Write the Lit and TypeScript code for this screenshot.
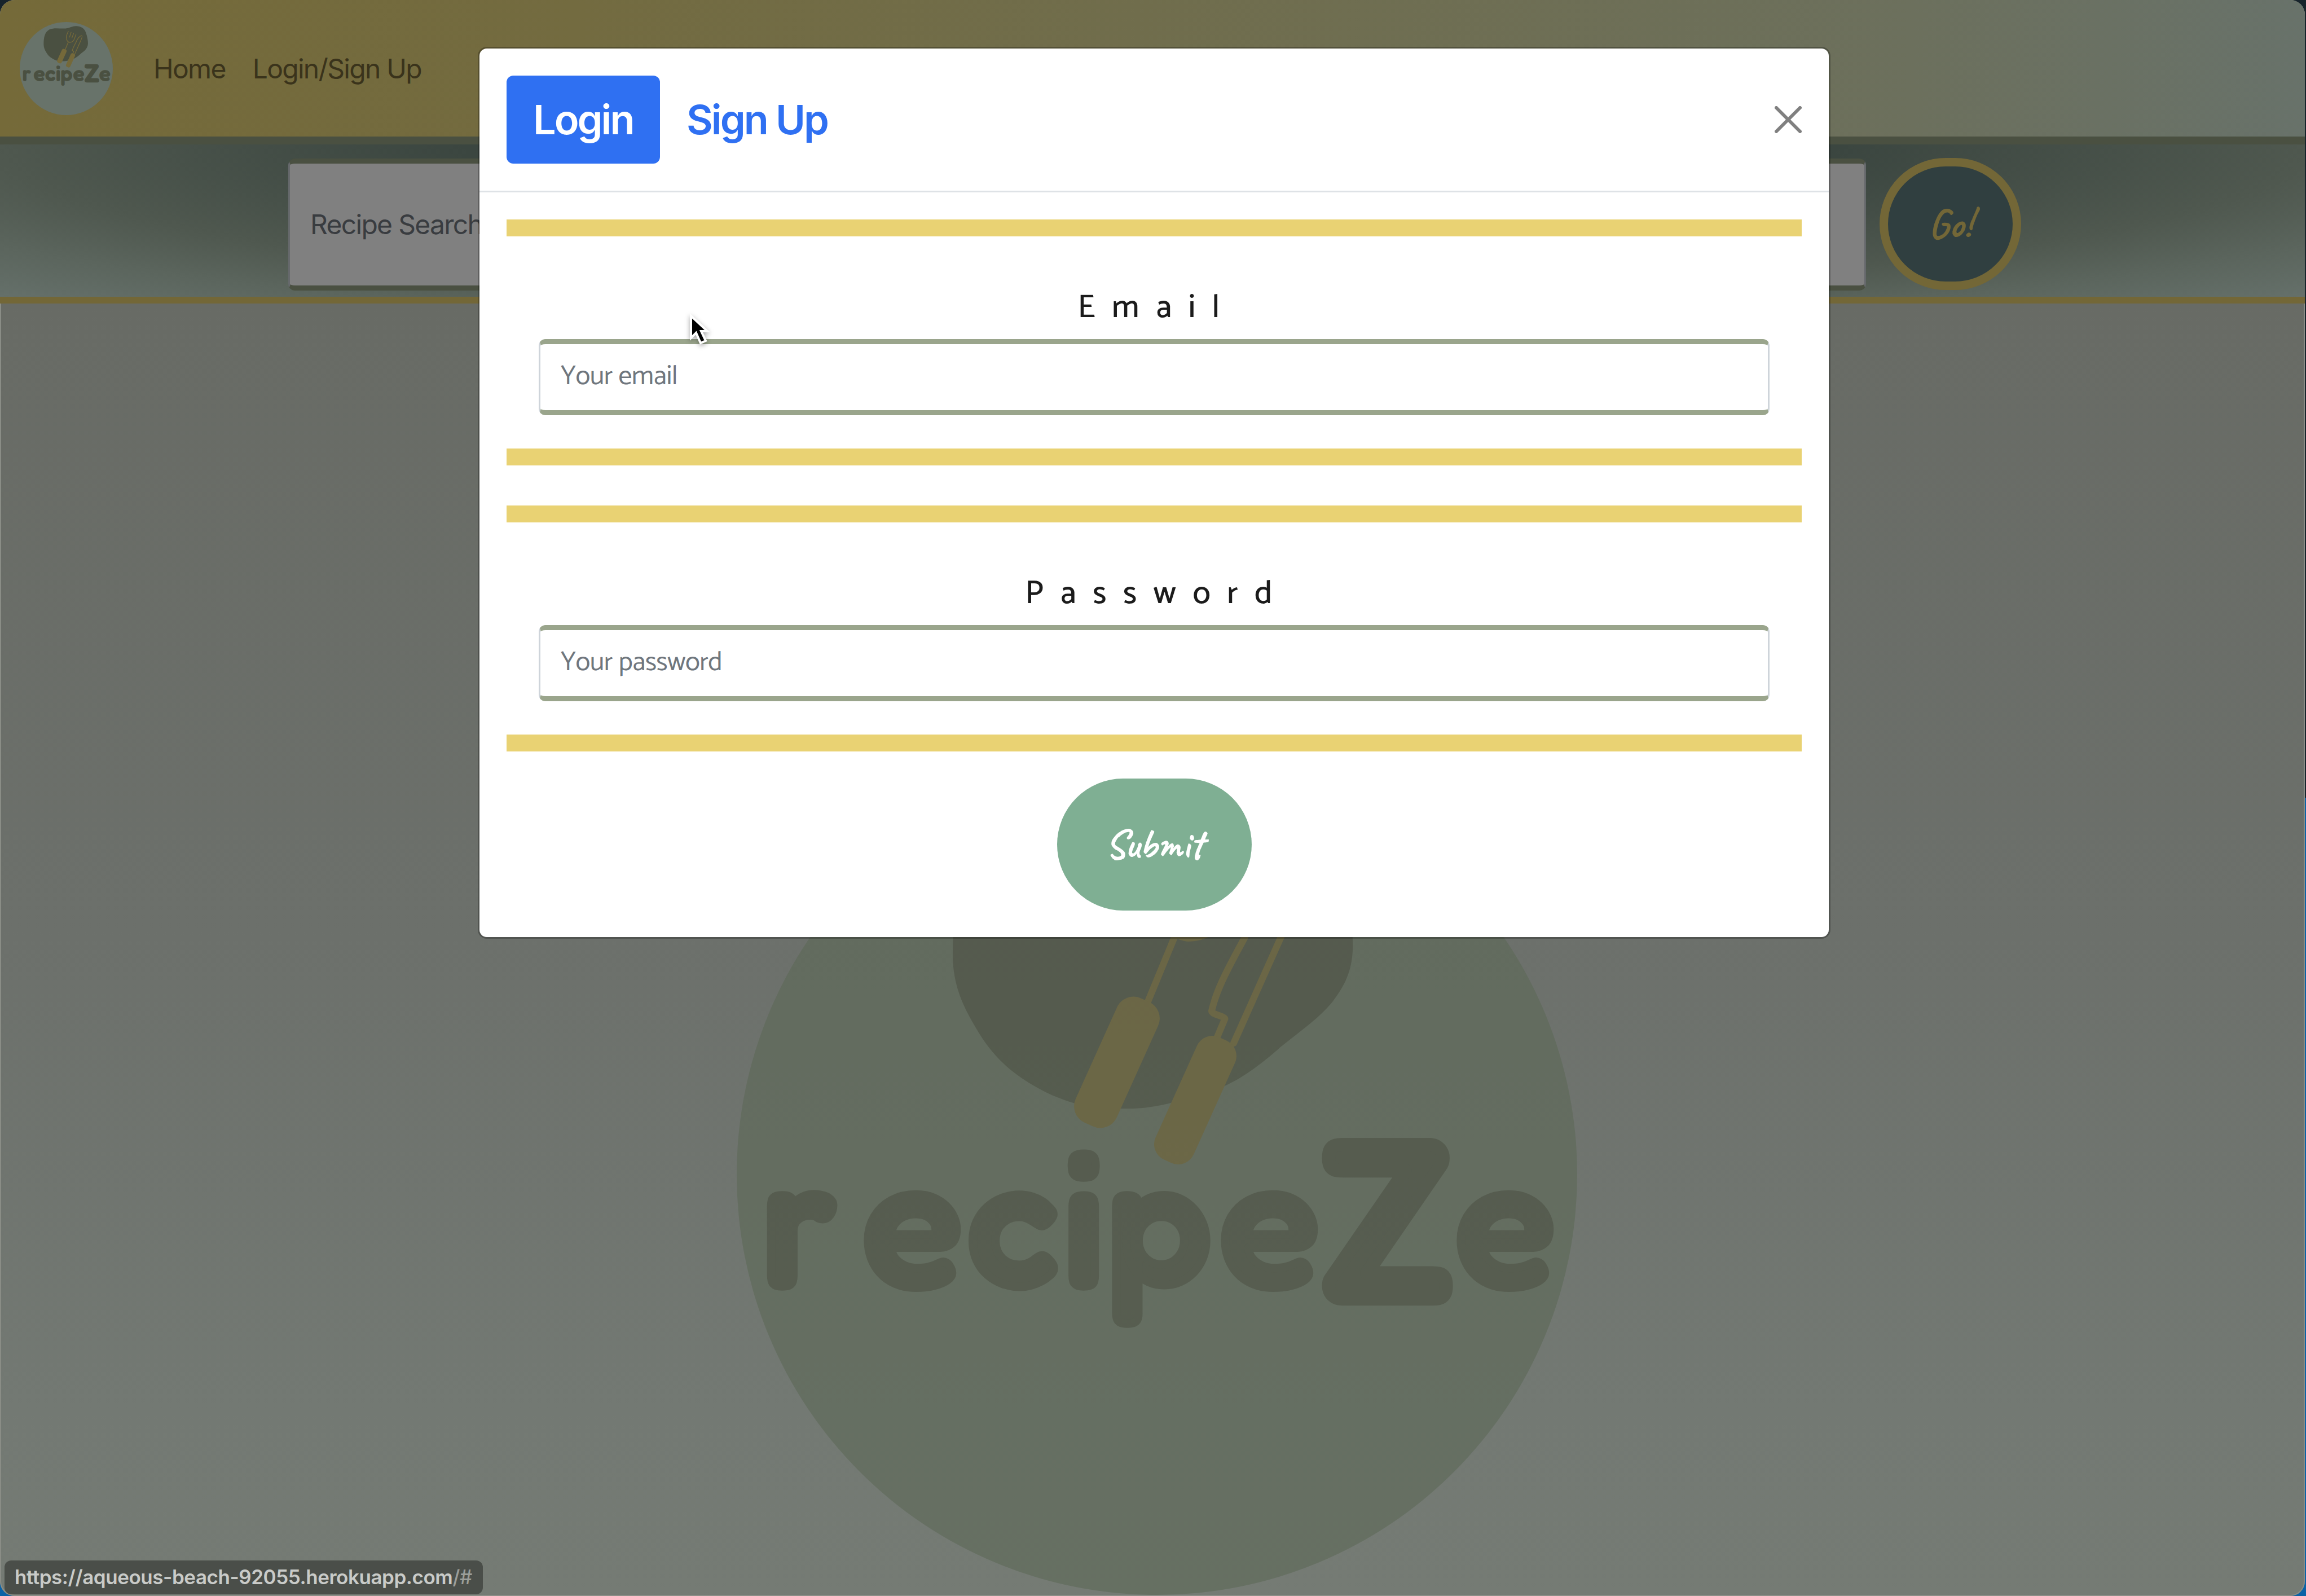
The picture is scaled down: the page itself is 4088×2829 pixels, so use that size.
import { LitElement, html, css, svg } from "lit";
import { customElement, property } from "lit/decorators.js";

@customElement("recipe-logo")
class RecipeLogo extends LitElement {
  static styles = css`
    :host {
      display: block;
    }
    .mark {
      display: block;
      width: 100%;
      height: 100%;
    }
    .disc {
      fill: var(--logo-disc);
    }
    .pan {
      fill: var(--logo-ink);
    }
    .line {
      fill: none;
      stroke: var(--logo-gold);
      stroke-width: 12;
      stroke-linecap: round;
      stroke-linejoin: round;
    }
    .handle {
      fill: var(--logo-gold);
    }
    .word {
      font-family: Fredoka, Itim, Inter, sans-serif;
      font-size: 328px;
      font-weight: 500;
      fill: var(--logo-ink);
      stroke: var(--logo-ink);
      stroke-width: 15;
      stroke-linejoin: round;
      stroke-linecap: round;
    }
    .big {
      font-size: 390px;
      stroke-width: 24;
    }
  `;

  render() {
    return html`<svg class="mark" viewBox="0 0 1490 1490" role="img">
      ${svg`
        <circle class="disc" cx="745" cy="745" r="745"></circle>
        <path class="pan" d="M383 363 C383 240 400 160 480 118 C560 85 650 112 737 103 C800 98 850 62 904 66 C980 68 1030 100 1055 160 C1080 230 1094 290 1092 348 C1090 385 1078 410 1056 439 C1030 470 1000 490 964 519 C935 545 900 572 867 587 C830 605 800 614 770 618 C740 625 720 628 694 628 C660 628 625 628 597 618 C570 610 548 600 526 587 C480 560 450 530 424 485 C400 445 385 410 383 363 Z"></path>
        <path class="line" d="M776 151 C765 185 746 205 746 240 C746 285 765 322 800 326 C845 326 868 292 878 262 L900 200"></path>
        <path class="line" d="M822 165 L798 242 M862 182 L835 255 M777 322 L725 448"></path>
        <path class="line" d="M849 508 L865 470 C868 464 842 462 842 455 C850 420 865 390 900 326 C920 270 960 215 995 220 C1010 228 985 280 964 326 L881 512"></path>
        <rect class="handle" x="-40" y="-121" width="80" height="242" rx="32" transform="translate(674 546) rotate(24.3)"></rect>
        <rect class="handle" x="-37" y="-119" width="74" height="238" rx="30" transform="translate(813 613) rotate(24.3)"></rect>
        <text class="word" y="940" x="44 223 407 577 658 856 1040 1274">recipe<tspan class="big" y="961">Z</tspan><tspan y="940">e</tspan></text>
      `}
    </svg>`;
  }
}

@customElement("form-group")
class FormGroup extends LitElement {
  @property() label = "";
  @property() hint = "";
  @property() kind = "text";

  static styles = css`
    :host {
      display: block;
    }
    .group {
      box-sizing: border-box;
      height: 436px;
      border-top: 30px solid #e9d273;
      border-bottom: 30px solid #e9d273;
      padding: 91px 57px 0;
      display: flex;
      flex-direction: column;
    }
    .label {
      font-family: Catamaran, Lato, "Open Sans", sans-serif;
      font-size: 57.6px;
      line-height: 72px;
      letter-spacing: 29.4px;
      font-weight: 500;
      color: #1b1b1b;
      text-align: center;
      margin-bottom: 19px;
      padding-left: 10px;
    }
    .field {
      box-sizing: border-box;
      width: 100%;
      height: 135px;
      border: 3px solid #ced4da;
      border-top: 9px solid #9aa58c;
      border-bottom: 9px solid #9aa58c;
      border-radius: 12px;
      padding: 0 36px 2px;
      background: #fff;
      font-family: Catamaran, Lato, "Open Sans", sans-serif;
      font-size: 48px;
      letter-spacing: -0.5px;
      color: #212529;
      outline: none;
    }
    .field::placeholder {
      color: #6f767d;
      opacity: 1;
    }
  `;

  render() {
    return html`<div class="group">
      <label class="label" for="field">${this.label}</label>
      <input class="field" id="field" type=${this.kind} placeholder=${this.hint} />
    </div>`;
  }
}

@customElement("app-root")
class AppRoot extends LitElement {
  static styles = css`
    :host {
      display: block;
      width: 4088px;
      height: 2829px;
      font-family: Inter, "Liberation Sans", sans-serif;
      font-size: 48px;
    }
    .desktop {
      width: 4088px;
      height: 2829px;
      background: linear-gradient(#17232b 50%, #0b62a6 50%);
    }
    .page {
      position: relative;
      box-sizing: border-box;
      width: 4086px;
      height: 2829px;
      overflow: hidden;
      border-radius: 26px;
      display: flex;
      flex-direction: column;
      background: linear-gradient(#686b65 538px, #6c706b 1650px, #737973 2500px, #757b74);
      box-shadow: inset 0 0 0 2px #8a8d86;
    }
    .nav {
      box-sizing: border-box;
      height: 256px;
      border-bottom: 14px solid #4a5041;
      background: linear-gradient(90deg, #756a39, #736b40 25%, #6c705d 83%, #68726a);
      display: flex;
      align-items: center;
      padding-left: 35px;
    }
    .brand {
      width: 165px;
      height: 165px;
      --logo-disc: #68736a;
      --logo-ink: #4a5041;
      --logo-gold: #75693a;
    }
    .links {
      display: flex;
      gap: 48px;
      margin-left: 72px;
      color: #3a331b;
    }
    .link {
      letter-spacing: -1.7px;
      font-weight: 430;
    }
    .search {
      box-sizing: border-box;
      height: 282px;
      border-bottom: 12px solid #736737;
      background: radial-gradient(ellipse farthest-corner at top, #37413a, #3b4640 42%, #4f584f 71%, #5b655d 85%, #65706a);
      display: flex;
      align-items: flex-start;
      padding: 24px 0 0 511px;
    }
    .query {
      box-sizing: border-box;
      width: 2797px;
      height: 234px;
      margin-top: 1px;
      border: 3px solid #66696c;
      border-top: 9px solid #4a5041;
      border-bottom: 9px solid #4a5041;
      border-radius: 12px;
      background: #808080;
      padding: 0 36px 2px;
      font-family: inherit;
      font-size: 48px;
      font-weight: 430;
      letter-spacing: -1.7px;
      outline: none;
    }
    .query::placeholder {
      color: #393c40;
      opacity: 1;
    }
    .go {
      box-sizing: border-box;
      width: 251px;
      height: 234px;
      margin-left: 24px;
      border: 15px solid #736737;
      border-radius: 117px;
      background: #303f40;
      color: #736737;
      display: flex;
      align-items: center;
      justify-content: center;
      padding: 0;
    }
    .script {
      font-family: Caveat, Lato, cursive;
      font-size: 72px;
      font-weight: 560;
      line-height: 1;
      display: block;
    }
    .stage {
      flex: 1;
      display: flex;
      justify-content: center;
      align-items: flex-end;
      padding: 0 0 2px 15px;
    }
    .emblem {
      width: 1490px;
      height: 1490px;
      flex: none;
      opacity: 0.6;
      --logo-disc: #5d6957;
      --logo-ink: #464d3b;
      --logo-gold: #6a602d;
    }
    .modal {
      position: absolute;
      left: 850px;
      top: 86px;
      width: 2392px;
      height: 1575px;
      box-sizing: border-box;
      border-radius: 13px;
      background: #fff;
      box-shadow: 0 0 0 3px rgba(0, 0, 0, 0.25);
      display: flex;
      flex-direction: column;
    }
    .head {
      box-sizing: border-box;
      height: 255px;
      border-bottom: 3px solid #dee2e6;
      padding: 48px 48px 0 48px;
      display: flex;
      align-items: flex-start;
    }
    .tab {
      box-sizing: border-box;
      height: 156px;
      padding: 24px 47px;
      border-radius: 12px;
      font-size: 72px;
      line-height: 108px;
      font-weight: 560;
      letter-spacing: -3px;
      color: #2f70f2;
    }
    .tab.active {
      width: 272px;
      background: #2f70f2;
      color: #fff;
    }
    .close {
      width: 48px;
      height: 48px;
      margin: 54px 0 0 auto;
      display: block;
    }
    .form {
      padding: 48px 48px 0 48px;
      display: flex;
      flex-direction: column;
      align-items: stretch;
      gap: 71px;
    }
    .submit {
      align-self: center;
      width: 345px;
      height: 234px;
      margin-top: -23px;
      border: 0;
      border-radius: 117px;
      background: #7faf93;
      color: #fff;
      display: flex;
      align-items: center;
      justify-content: center;
      padding: 0;
    }
    .status {
      position: absolute;
      left: 8px;
      top: 2766px;
      box-sizing: border-box;
      width: 848px;
      height: 60px;
      border-radius: 12px;
      background: #4a4e49;
      color: #c9cbc8;
      font-size: 35px;
      font-weight: 600;
      letter-spacing: -0.45px;
      line-height: 58px;
      padding-left: 18px;
      white-space: nowrap;
    }
    .tail {
      color: #9b9e9a;
      font-weight: 500;
    }
    .pointer {
      position: absolute;
      left: 1216px;
      top: 552px;
      width: 50px;
      height: 64px;
      filter: drop-shadow(0 3px 4px rgba(0, 0, 0, 0.35));
    }
  `;

  render() {
    return html`<div class="desktop">
      <div class="page">
        <nav class="nav">
          <recipe-logo class="brand"></recipe-logo>
          <div class="links">
            <span class="link">Home</span>
            <span class="link">Login/Sign Up</span>
          </div>
        </nav>
        <section class="search">
          <input class="query" placeholder="Recipe Search" />
          <button class="go"><span class="script">Go!</span></button>
        </section>
        <main class="stage"><recipe-logo class="emblem"></recipe-logo></main>

        <div class="modal">
          <div class="head">
            <span class="tab active">Login</span>
            <span class="tab">Sign Up</span>
            <svg class="close" viewBox="0 0 48 48">
              <path d="M3 3 L45 45 M45 3 L3 45" fill="none" stroke="#808080" stroke-width="6" stroke-linecap="round"></path>
            </svg>
          </div>
          <div class="form">
            <form-group label="Email" hint="Your email"></form-group>
            <form-group label="Password" hint="Your password" kind="password"></form-group>
            <button class="submit"><span class="script">Submit</span></button>
          </div>
        </div>

        <div class="status">https://aqueous-beach-92055.herokuapp.com<span class="tail">/#</span></div>

        <svg class="pointer" viewBox="0 0 50 64">
          <path d="M9 8 L9 47 L18 38 L26 56 L35 52 L27 35 L38 35 Z" fill="#000" stroke="#fff" stroke-width="4"></path>
        </svg>
      </div>
    </div>`;
  }
}
